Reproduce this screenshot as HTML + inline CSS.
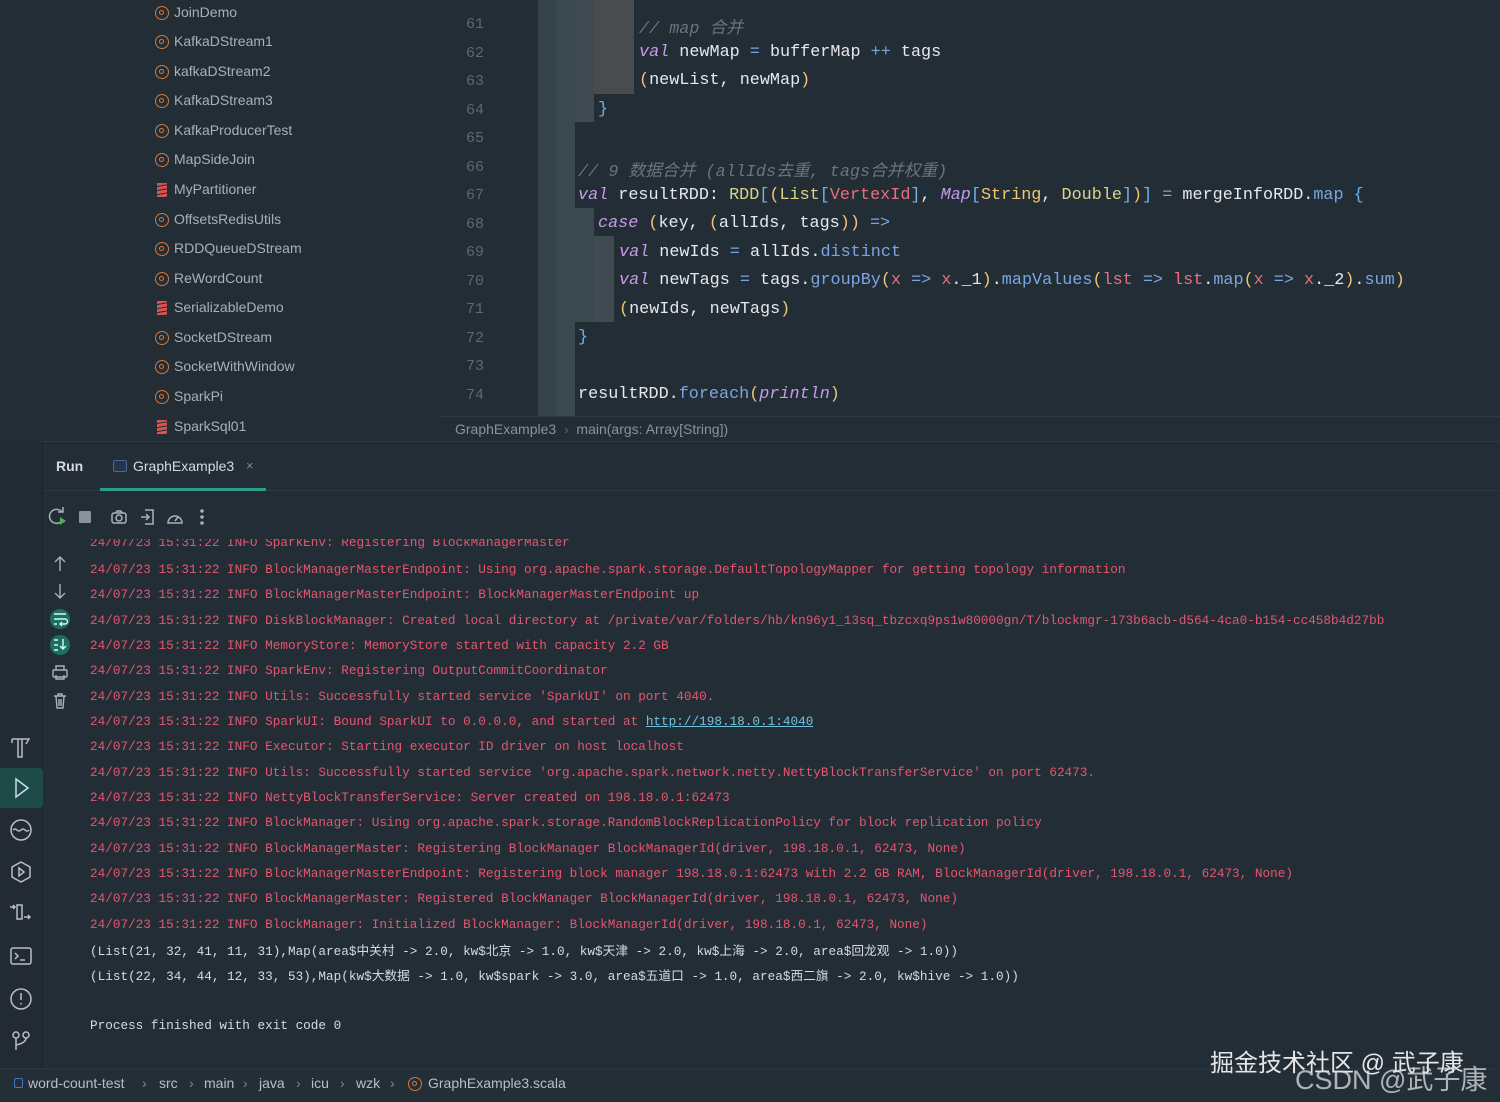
<!DOCTYPE html>
<html><head><meta charset="utf-8"><style>
*{margin:0;padding:0;box-sizing:border-box}
body{width:1500px;height:1102px;background:#232d36;position:relative;overflow:hidden;font-family:"Liberation Sans","Noto Sans CJK SC",sans-serif;color:#b8bfc6}
.a{position:absolute;white-space:pre}
.mono{font-family:"Liberation Mono","Noto Sans CJK SC",monospace}
.fi{font-size:14px;color:#a9b0b7;left:174px}
.ic{position:absolute;left:155px;width:14px;height:14px;border:1.5px solid #d5783a;border-radius:50%}
.ic:after{content:"";position:absolute;left:3px;top:3px;width:5px;height:5px;border:1.3px solid #d5783a;border-radius:50%;box-sizing:border-box}
.is{position:absolute;left:157px;width:10px;height:14px;background:repeating-linear-gradient(170deg,#d9534f 0 3px,transparent 3px 4px)}
.ln{font-family:"Liberation Mono",monospace;font-size:15px;color:#5e6870;left:450px;width:34px;text-align:right}
.code{font-size:16.8px;color:#e6e8ea}
.k{color:#c79be6;font-style:italic}.c{color:#6b747c;font-style:italic}.y{color:#f0c674}.b{color:#6fb3e8}.m{color:#7aa6e0}.r{color:#e86f7e}.g{color:#d8d58a}.o{color:#f0c674}
.con{font-size:12.7px;color:#e5566e;left:90px}
.w{color:#d7dade}
.svg{position:absolute}
.sb{top:1075px;font-size:14px;color:#b8bfc6}
.sep{top:1075px;font-size:14px;color:#7e878f}
</style></head><body>
<div class="a" style="left:0;top:440px;width:43px;height:630px;background:#222b33;border-right:1px solid #1c242b"></div>
<div class="a" style="left:0;top:768px;width:43px;height:40px;background:#1e4b47;border-radius:0 4px 4px 0"></div>

<div class="ic" style="top:6px"></div><div class="a fi" style="top:4px">JoinDemo</div>
<div class="ic" style="top:35px"></div><div class="a fi" style="top:33px">KafkaDStream1</div>
<div class="ic" style="top:65px"></div><div class="a fi" style="top:63px">kafkaDStream2</div>
<div class="ic" style="top:94px"></div><div class="a fi" style="top:92px">KafkaDStream3</div>
<div class="ic" style="top:124px"></div><div class="a fi" style="top:122px">KafkaProducerTest</div>
<div class="ic" style="top:153px"></div><div class="a fi" style="top:151px">MapSideJoin</div>
<div class="is" style="top:183px"></div><div class="a fi" style="top:181px">MyPartitioner</div>
<div class="ic" style="top:213px"></div><div class="a fi" style="top:211px">OffsetsRedisUtils</div>
<div class="ic" style="top:242px"></div><div class="a fi" style="top:240px">RDDQueueDStream</div>
<div class="ic" style="top:272px"></div><div class="a fi" style="top:270px">ReWordCount</div>
<div class="is" style="top:301px"></div><div class="a fi" style="top:299px">SerializableDemo</div>
<div class="ic" style="top:331px"></div><div class="a fi" style="top:329px">SocketDStream</div>
<div class="ic" style="top:360px"></div><div class="a fi" style="top:358px">SocketWithWindow</div>
<div class="ic" style="top:390px"></div><div class="a fi" style="top:388px">SparkPi</div>
<div class="is" style="top:420px"></div><div class="a fi" style="top:418px">SparkSql01</div>

<div class="a ln" style="top:16px">61</div>
<div class="a ln" style="top:45px">62</div>
<div class="a ln" style="top:73px">63</div>
<div class="a ln" style="top:102px">64</div>
<div class="a ln" style="top:130px">65</div>
<div class="a ln" style="top:159px">66</div>
<div class="a ln" style="top:187px">67</div>
<div class="a ln" style="top:216px">68</div>
<div class="a ln" style="top:244px">69</div>
<div class="a ln" style="top:273px">70</div>
<div class="a ln" style="top:301px">71</div>
<div class="a ln" style="top:330px">72</div>
<div class="a ln" style="top:358px">73</div>
<div class="a ln" style="top:387px">74</div>

<div class="a" style="left:538px;top:0;width:18px;height:416px;background:#36434a"></div>
<div class="a" style="left:556px;top:0;width:19px;height:416px;background:#3b484e"></div>
<div class="a" style="left:575px;top:0;width:19px;height:122px;background:#3f4b51"></div>
<div class="a" style="left:594px;top:0;width:40px;height:94px;background:#484c4f"></div>
<div class="a" style="left:575px;top:208px;width:19px;height:114px;background:#3b484e"></div>
<div class="a" style="left:594px;top:236px;width:20px;height:86px;background:#3f4b51"></div>

<div class="a mono code" style="left:639px;top:14px"><span class="c">// map 合并</span></div>
<div class="a mono code" style="left:639px;top:43px"><span class="k">val</span> newMap <span class="m">=</span> bufferMap <span class="m">++</span> tags</div>
<div class="a mono code" style="left:639px;top:71px"><span class="y">(</span>newList, newMap<span class="y">)</span></div>
<div class="a mono code" style="left:598px;top:100px"><span class="b">}</span></div>
<div class="a mono code" style="left:578px;top:157px"><span class="c">// 9 数据合并 (allIds去重, tags合并权重)</span></div>
<div class="a mono code" style="left:578px;top:186px"><span class="k">val</span> resultRDD: <span class="g">RDD</span><span class="b">[</span><span class="y">(</span><span class="g">List</span><span class="b">[</span><span class="r">VertexId</span><span class="b">]</span>, <span class="k">Map</span><span class="b">[</span><span class="o">String</span>, <span class="g">Double</span><span class="b">]</span><span class="y">)</span><span class="b">]</span> <span class="m">=</span> mergeInfoRDD.<span class="m">map</span> <span class="b">{</span></div>
<div class="a mono code" style="left:598px;top:214px"><span class="k">case</span> <span class="y">(</span>key, <span class="y">(</span>allIds, tags<span class="y">))</span> <span class="m">=&gt;</span></div>
<div class="a mono code" style="left:619px;top:243px"><span class="k">val</span> newIds <span class="m">=</span> allIds.<span class="m">distinct</span></div>
<div class="a mono code" style="left:619px;top:271px"><span class="k">val</span> newTags <span class="m">=</span> tags.<span class="m">groupBy</span><span class="y">(</span><span class="r">x</span> <span class="m">=&gt;</span> <span class="r">x</span>._1<span class="y">)</span>.<span class="m">mapValues</span><span class="y">(</span><span class="r">lst</span> <span class="m">=&gt;</span> <span class="r">lst</span>.<span class="m">map</span><span class="y">(</span><span class="r">x</span> <span class="m">=&gt;</span> <span class="r">x</span>._2<span class="y">)</span>.<span class="m">sum</span><span class="y">)</span></div>
<div class="a mono code" style="left:619px;top:300px"><span class="y">(</span>newIds, newTags<span class="y">)</span></div>
<div class="a mono code" style="left:578px;top:328px"><span class="b">}</span></div>
<div class="a mono code" style="left:578px;top:385px">resultRDD.<span class="m">foreach</span><span class="y">(</span><span class="k">println</span><span class="y">)</span></div>

<div class="a" style="left:440px;top:416px;width:1060px;height:1px;background:#2e3941"></div>
<div class="a" style="left:455px;top:421px;font-size:14px;color:#8a939b">GraphExample3  <span style="color:#5a646c">›</span>  main(args: Array[String])</div>
<div class="a" style="left:40px;top:441px;width:1460px;height:1px;background:#2e3941"></div>

<div class="a" style="left:56px;top:458px;font-size:14px;font-weight:bold;color:#d7dade">Run</div>
<div class="a" style="left:113px;top:460px;width:14px;height:12px;border:1.5px solid #4a6a9a;border-radius:2px;background:#263447"></div>
<div class="a" style="left:133px;top:458px;font-size:14px;color:#d7dade">GraphExample3</div>
<div class="a" style="left:246px;top:458px;font-size:13px;color:#7e878f">×</div>
<div class="a" style="left:44px;top:490px;width:1456px;height:1px;background:#2e3941"></div>
<div class="a" style="left:100px;top:488px;width:166px;height:3px;background:#2a9d8f"></div>

<svg class="svg" style="left:46px;top:506px" width="170" height="22" fill="none" stroke="#aab2b9" stroke-width="1.5">
<path d="M16 6a7 7 0 1 0 1 7"/><path d="M12 6h5V1"/><path d="M14 11l6 4-6 4z" fill="#4caf50" stroke="none"/>
<rect x="33" y="5" width="12" height="12" fill="#8b939a" stroke="none" rx="1"/>
<rect x="66" y="7" width="14" height="10" rx="2"/><circle cx="73" cy="12" r="3"/><path d="M70 7l1-2h4l1 2"/>
<path d="M99 4h8v14h-8"/><path d="M95 11h8M100 8l3 3-3 3"/>
<path d="M122 17a7 7 0 1 1 14 0z"/><path d="M129 15l3-4"/>
<circle cx="156" cy="5" r="1" fill="#aab2b9"/><circle cx="156" cy="11" r="1" fill="#aab2b9"/><circle cx="156" cy="17" r="1" fill="#aab2b9"/>
</svg>

<svg class="svg" style="left:48px;top:552px" width="26" height="160" fill="none" stroke="#aab2b9" stroke-width="1.4">
<path d="M12 5v14M7 10l5-5 5 5"/>
<path d="M12 32v14M7 41l5 5 5-5"/>
<circle cx="12" cy="67" r="10" fill="#1f6e60" stroke="none"/><path d="M6 62h12M6 67h11a2 2 0 0 1 0 5h-4M6 72h3M14 70l-2 2 2 2" stroke="#cfe"/>
<circle cx="12" cy="93" r="10" fill="#1f6e60" stroke="none"/><path d="M6 88h4M6 93h4M6 98h4M15 87v10M12 94l3 3 3-3" stroke="#cfe"/>
<rect x="5" y="118" width="14" height="7" rx="1"/><path d="M8 118v-4h8v4M8 123v4h8v-4"/>
<path d="M6 144h12M8 144l1 12h6l1-12M10 144v-2h4v2M11 147v7M13 147v7"/>
</svg>

<svg class="svg" style="left:8px;top:732px" width="28" height="330" fill="none" stroke="#b8bfc6" stroke-width="1.5">
<path d="M4 7h17l-3 5M4 7v4M10 7v18h4V7"/>
<path d="M8 47l12 9-12 9z" stroke="#cde"/>
<circle cx="13" cy="98" r="10"/><path d="M5 98q2-2 4 0t4 0 4 0 4 0"/>
<path d="M13 130l9 5v10l-9 5-9-5v-10z"/><path d="M11 136l5 4-5 4z"/>
<path d="M9 173v14h5v-14zM2 175h5M5 173l2 2-2 2M16 185h6M20 183l2 2-2 2"/>
<rect x="3" y="216" width="20" height="16" rx="2"/><path d="M7 221l3 3-3 3M12 228h5"/>
<circle cx="13" cy="267" r="10"/><path d="M13 261v7M13 271v1.5"/>
<circle cx="8" cy="303" r="3"/><circle cx="18" cy="303" r="3"/><path d="M8 306v12M18 306q0 5-10 7"/>
</svg>

<div class="a mono con" style="top:535px;clip-path:inset(4px 0 0 0)">24/07/23 15:31:22 INFO SparkEnv: Registering BlockManagerMaster</div>
<div class="a mono con" style="top:562px">24/07/23 15:31:22 INFO BlockManagerMasterEndpoint: Using org.apache.spark.storage.DefaultTopologyMapper for getting topology information</div>
<div class="a mono con" style="top:587px">24/07/23 15:31:22 INFO BlockManagerMasterEndpoint: BlockManagerMasterEndpoint up</div>
<div class="a mono con" style="top:613px">24/07/23 15:31:22 INFO DiskBlockManager: Created local directory at /private/var/folders/hb/kn96y1_13sq_tbzcxq9ps1w80000gn/T/blockmgr-173b6acb-d564-4ca0-b154-cc458b4d27bb</div>
<div class="a mono con" style="top:638px">24/07/23 15:31:22 INFO MemoryStore: MemoryStore started with capacity 2.2 GB</div>
<div class="a mono con" style="top:663px">24/07/23 15:31:22 INFO SparkEnv: Registering OutputCommitCoordinator</div>
<div class="a mono con" style="top:689px">24/07/23 15:31:22 INFO Utils: Successfully started service 'SparkUI' on port 4040.</div>
<div class="a mono con" style="top:714px">24/07/23 15:31:22 INFO SparkUI: Bound SparkUI to 0.0.0.0, and started at <span style="color:#6fc3df;text-decoration:underline">http://198.18.0.1:4040</span></div>
<div class="a mono con" style="top:739px">24/07/23 15:31:22 INFO Executor: Starting executor ID driver on host localhost</div>
<div class="a mono con" style="top:765px">24/07/23 15:31:22 INFO Utils: Successfully started service 'org.apache.spark.network.netty.NettyBlockTransferService' on port 62473.</div>
<div class="a mono con" style="top:790px">24/07/23 15:31:22 INFO NettyBlockTransferService: Server created on 198.18.0.1:62473</div>
<div class="a mono con" style="top:815px">24/07/23 15:31:22 INFO BlockManager: Using org.apache.spark.storage.RandomBlockReplicationPolicy for block replication policy</div>
<div class="a mono con" style="top:841px">24/07/23 15:31:22 INFO BlockManagerMaster: Registering BlockManager BlockManagerId(driver, 198.18.0.1, 62473, None)</div>
<div class="a mono con" style="top:866px">24/07/23 15:31:22 INFO BlockManagerMasterEndpoint: Registering block manager 198.18.0.1:62473 with 2.2 GB RAM, BlockManagerId(driver, 198.18.0.1, 62473, None)</div>
<div class="a mono con" style="top:891px">24/07/23 15:31:22 INFO BlockManagerMaster: Registered BlockManager BlockManagerId(driver, 198.18.0.1, 62473, None)</div>
<div class="a mono con" style="top:917px">24/07/23 15:31:22 INFO BlockManager: Initialized BlockManager: BlockManagerId(driver, 198.18.0.1, 62473, None)</div>
<div class="a mono con w" style="top:940px">(List(21, 32, 41, 11, 31),Map(area$中关村 -&gt; 2.0, kw$北京 -&gt; 1.0, kw$天津 -&gt; 2.0, kw$上海 -&gt; 2.0, area$回龙观 -&gt; 1.0))</div>
<div class="a mono con w" style="top:965px">(List(22, 34, 44, 12, 33, 53),Map(kw$大数据 -&gt; 1.0, kw$spark -&gt; 3.0, area$五道口 -&gt; 1.0, area$西二旗 -&gt; 2.0, kw$hive -&gt; 1.0))</div>
<div class="a mono con w" style="top:1018px">Process finished with exit code 0</div>

<div class="a" style="left:0;top:1068px;width:1500px;height:34px;background:#242e37;border-top:1px solid #2c363f"></div>
<div class="a" style="left:14px;top:1078px;width:9px;height:10px;border:1.5px solid #4a74c9;border-radius:2px"></div>
<div class="a sb" style="left:28px">word-count-test</div><div class="a sep" style="left:142px">›</div>
<div class="a sb" style="left:159px">src</div><div class="a sep" style="left:189px">›</div>
<div class="a sb" style="left:204px">main</div><div class="a sep" style="left:243px">›</div>
<div class="a sb" style="left:259px">java</div><div class="a sep" style="left:296px">›</div>
<div class="a sb" style="left:311px">icu</div><div class="a sep" style="left:340px">›</div>
<div class="a sb" style="left:356px">wzk</div><div class="a sep" style="left:390px">›</div>
<div class="ic" style="left:408px;top:1077px"></div>
<div class="a sb" style="left:428px">GraphExample3.scala</div>

<div class="a" style="left:1210px;top:1043px;font-size:24px;color:#e4e6e8">掘金技术社区 @ 武子康</div>
<div class="a" style="left:1295px;top:1058px;font-size:27px;color:rgba(220,224,228,0.75)">CSDN @武子康</div>
</body></html>
